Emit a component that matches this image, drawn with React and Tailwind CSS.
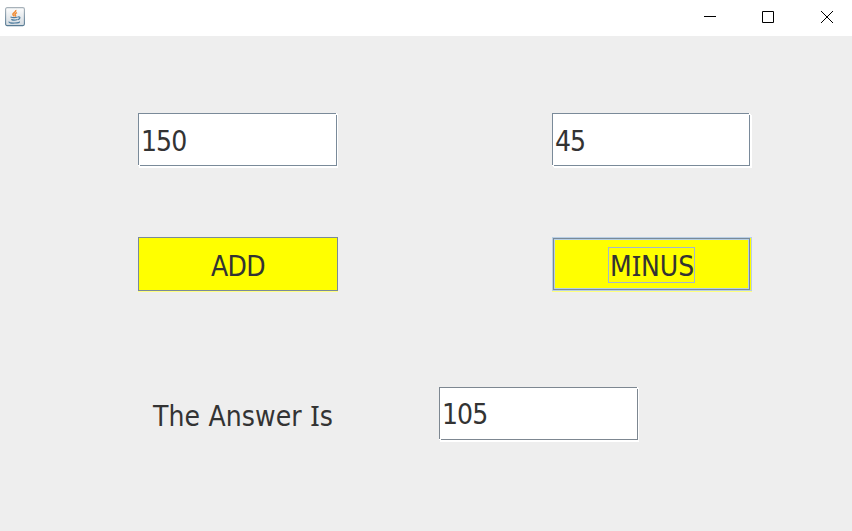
import React from "react";

const font = "font-['DejaVu_Sans_Condensed','DejaVu_Sans',sans-serif] font-[stretch:condensed] text-[28px] leading-8 text-[#333] whitespace-pre";

function I() {
  return <span className="font-['Noto_Sans',sans-serif]">I</span>;
}

function Field({ value, className, frame = "border-[#7a8a99]", glow = "shadow-[1px_1px_0_0_#fff,1px_2px_0_0_#fff]", pad = "pt-[13px]" }) {
  return (
    <div className={`relative h-[53px] border bg-white ${glow} ${frame} ${className}`}>
      <div className={`${font} ${pad} pl-[2px] -mt-px tracking-[-0.9px]`}>{value}</div>
      <i className="absolute -right-px -top-px h-0.5 w-px bg-white" />
      <i className="absolute -left-px -bottom-px h-px w-0.5 bg-white" />
    </div>
  );
}

function JavaIcon() {
  return (
    <svg width="20" height="20" viewBox="0 0 20 20" fill="none">
      <defs>
        <linearGradient id="tile" x1="0" y1="0" x2="0" y2="1">
          <stop offset="0" stopColor="#fdfdfd" />
          <stop offset="1" stopColor="#d3dae0" />
        </linearGradient>
        <linearGradient id="edge" x1="0" y1="0" x2="0" y2="1">
          <stop offset="0" stopColor="#a8b2ba" />
          <stop offset="1" stopColor="#587b94" />
        </linearGradient>
      </defs>
      <rect x=".6" y=".6" width="18.8" height="18" rx="1.5" fill="url(#tile)" stroke="url(#edge)" strokeWidth="1.1" />
      <path d="M10.8 3C11.4 5 7.6 5.8 7.9 7.3c.1.9 1.1 1.3 1.2 2.1M12 5.6c-1.8.8-2.6 1.6-1.7 2.4.5.6.2 1-.3 1.4" stroke="#f08c35" strokeWidth="1.5" />
      <path d="M5.5 10c1.8.7 5.5.6 7.2 0M6.3 12.4c1.7.9 4.5.8 6.2.1M13 10c2.5-.6 2.6 1.9-.1 2.7M4.3 14.6c-1 1.4 2 1.5 5.5 1.4 3.4 0 5-.6 4.5-1.5" stroke="#4e7d9f" strokeWidth="1.2" />
    </svg>
  );
}

export default function App() {
  return (
    <div className="h-[531px] w-[852px] overflow-hidden bg-[#eee]">
      <header className="flex h-9 items-start justify-between bg-white">
        <div className="pl-[5px] pt-[7px]"><JavaIcon /></div>
        <div className="flex gap-[46px] pt-[11px] pr-[19px]">
          <svg width="12" height="12"><path d="M0 5.5h12" stroke="#000" /></svg>
          <svg width="12" height="12" fill="none" className="mr-px"><path d="M.5.5h11v11H.5z" stroke="#000" /></svg>
          <svg width="12" height="12"><path d="M0 0l12 12M12 0L0 12" stroke="#000" /></svg>
        </div>
      </header>
      <main>
        <div className="flex pt-[77px] pl-[138px]">
          <Field value="150" className="w-[199px]" />
          <Field value="45" className="ml-[215px] w-[198px]" glow="shadow-[1px_1px_0_0_#fff,2px_2px_0_0_#fff]" />
        </div>
        <div className="flex pt-[71px] pl-[138px]">
          <button className={`${font} h-[54px] w-[200px] border border-[#7a8a99] bg-[#ff0] pt-1.5 tracking-[-0.6px] shadow-[0_1px_0_0_#ffff80]`}>ADD</button>
          <button className="ml-[214px] h-[54px] w-[200px] border border-[#b8cfe5] bg-[#ff0] pr-px shadow-[0_1px_0_0_#ffff80]">
            <div className="h-[52px] border border-[#7a8a99]">
              <div className="flex h-full justify-center border border-[#b8cfe5] pt-[7px]">
                <div className={`${font} h-[36px] w-[87px] border border-[#a3b8cc] text-left pl-px pt-px tracking-[-0.1px]`}>M<I />NUS</div>
              </div>
            </div>
          </button>
        </div>
        <div className="flex pt-24 pl-[153px]">
          <div className={`${font} w-[286px] pt-3 tracking-[0.05px] [word-spacing:0.5px]`}>The Answer <I />s</div>
          <Field value="105" className="w-[199px]" frame="border-[#7d8791]" pad="pt-[12px]" />
        </div>
      </main>
    </div>
  );
}
